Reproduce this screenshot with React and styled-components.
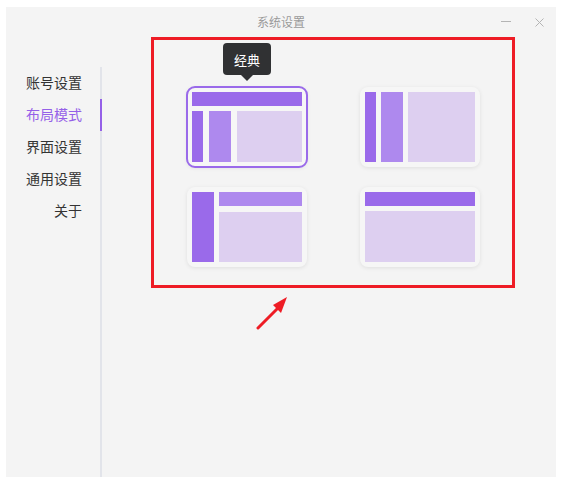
import React from 'react';
import styled, { createGlobalStyle } from 'styled-components';

const GlobalStyle = createGlobalStyle`
  body {
    margin: 0;
    background: #ffffff;
    font-family: "Noto Sans CJK SC", "Noto Sans", sans-serif;
  }
`;

const DARK = '#9a6aea';
const MID = '#ae89ee';
const LIGHT = '#ddcff0';

const Window = styled.div`
  position: relative;
  margin: 7px 0 0 6px;
  width: 550px;
  height: 470px;
  background: #f4f4f4;
  display: flex;
  flex-direction: column;
`;

const TitleBar = styled.div`
  height: 30px;
  flex-shrink: 0;
  display: flex;
  align-items: center;
  justify-content: center;
  position: relative;
`;

const Title = styled.div`
  font-size: 12px;
  color: #9a9a9a;
  line-height: 1;
`;

const WindowControls = styled.div`
  position: absolute;
  right: 12px;
  top: 0;
  height: 30px;
  display: flex;
  align-items: center;
  gap: 24px;
`;

const Minimize = styled.span`
  display: block;
  width: 10px;
  height: 1px;
  margin-top: -1px;
  background: #b4b4b4;
`;

const Body = styled.div`
  flex: 1;
  display: flex;
  min-height: 0;
`;

const Sidebar = styled.div`
  width: 96px;
  flex-shrink: 0;
  padding-top: 30px;
  display: flex;
`;

const Menu = styled.ul`
  list-style: none;
  margin: 0;
  padding: 0;
  flex: 1;
  border-right: 2px solid #e2e4ea;
`;

const MenuItem = styled.li`
  position: relative;
  height: 32px;
  line-height: 31px;
  text-align: right;
  padding-right: 18px;
  font-size: 14px;
  color: ${p => (p.active ? '#9560e8' : '#333333')};

  &::after {
    content: '';
    display: ${p => (p.active ? 'block' : 'none')};
    position: absolute;
    right: -2px;
    top: 0;
    width: 2px;
    height: 32px;
    background: #9560e8;
  }
`;

const Content = styled.div`
  flex: 1;
  padding-left: 49px;
`;

const Highlight = styled.div`
  box-sizing: border-box;
  width: 364px;
  height: 251px;
  border: 3px solid #ee1c25;
  padding: 47px 0 0 33px;
`;

const LayoutGrid = styled.div`
  display: grid;
  grid-template-columns: 120px 120px;
  grid-auto-rows: 80px;
  column-gap: 53px;
  row-gap: 20px;
`;

const Card = styled.div`
  position: relative;
  box-sizing: border-box;
  padding: 5px;
  border-radius: 8px;
  background: #f6f6f6;
  box-shadow: 0 1px 4px rgba(0, 0, 0, 0.09);
  display: flex;
  flex-direction: ${p => p.dir || 'column'};
  gap: 5px;
  outline: ${p => (p.selected ? `2px solid ${DARK}` : 'none')};
  outline-offset: -1px;
`;

const Block = styled.div`
  background: ${p => p.color};
  flex: ${p => p.grow || 'none'};
  width: ${p => (p.w ? `${p.w}px` : 'auto')};
  height: ${p => (p.h ? `${p.h}px` : 'auto')};
`;

const Row = styled.div`
  flex: 1;
  display: flex;
  gap: ${p => p.gap || 5}px;
`;

const Column = styled.div`
  flex: 1;
  display: flex;
  flex-direction: column;
  gap: ${p => p.gap || 5}px;
`;

const Tooltip = styled.div`
  position: absolute;
  left: 50%;
  bottom: calc(100% + 12px);
  transform: translateX(-50%);
  width: 48px;
  height: 32px;
  border-radius: 4px;
  background: #303133;
  color: #ffffff;
  font-size: 13px;
  display: flex;
  align-items: center;
  justify-content: center;

  &::after {
    content: '';
    position: absolute;
    left: 50%;
    top: 100%;
    margin-left: -6px;
    border-left: 6px solid transparent;
    border-right: 6px solid transparent;
    border-top: 6px solid #303133;
  }
`;

const Pointer = styled.svg`
  position: absolute;
  left: 250px;
  top: 283px;
`;

const menu = ['账号设置', '布局模式', '界面设置', '通用设置', '关于'];

export default function App() {
  return (
    <>
      <GlobalStyle />
      <Window>
        <TitleBar>
          <Title>系统设置</Title>
          <WindowControls>
            <Minimize />
            <svg width="9" height="9" viewBox="0 0 9 9">
              <path d="M0.5 0.5 L8.5 8.5 M8.5 0.5 L0.5 8.5" stroke="#b4b4b4" strokeWidth="1" fill="none" />
            </svg>
          </WindowControls>
        </TitleBar>
        <Body>
          <Sidebar>
            <Menu>
              {menu.map(m => (
                <MenuItem key={m} active={m === '布局模式'}>
                  {m}
                </MenuItem>
              ))}
            </Menu>
          </Sidebar>
          <Content>
            <Highlight>
              <LayoutGrid>
                <Card selected>
                  <Tooltip>经典</Tooltip>
                  <Block color={DARK} h={14} />
                  <Row gap={6}>
                    <Block color={DARK} w={11} />
                    <Block color={MID} w={22} />
                    <Block color={LIGHT} grow={1} />
                  </Row>
                </Card>
                <Card dir="row">
                  <Block color={DARK} w={11} />
                  <Block color={MID} w={22} />
                  <Block color={LIGHT} grow={1} />
                </Card>
                <Card dir="row">
                  <Block color={DARK} w={22} />
                  <Column gap={6}>
                    <Block color={MID} h={14} />
                    <Block color={LIGHT} grow={1} />
                  </Column>
                </Card>
                <Card>
                  <Block color={DARK} h={14} />
                  <Block color={LIGHT} grow={1} />
                </Card>
              </LayoutGrid>
            </Highlight>
          </Content>
        </Body>
        <Pointer width="44" height="50" viewBox="0 0 44 50">
          <path d="M2 38 L25 15" stroke="#ee1c25" strokeWidth="3" strokeLinecap="round" />
          <path d="M31 7 L17 15 L25 23 Z" fill="#ee1c25" />
        </Pointer>
      </Window>
    </>
  );
}
